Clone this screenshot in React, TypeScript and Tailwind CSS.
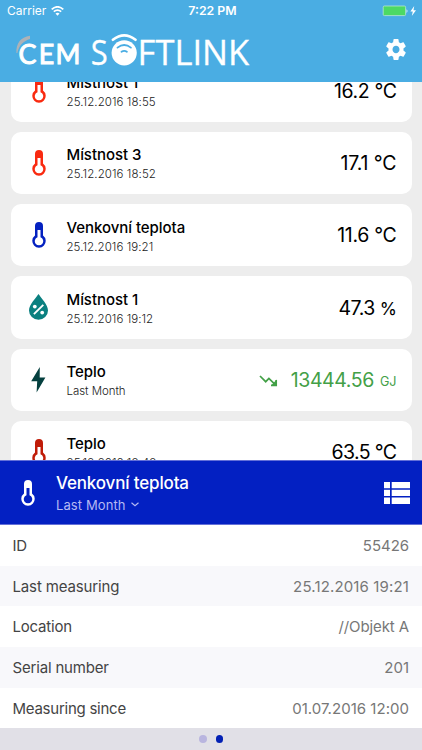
import React from 'react';

type IconKind = 'thermo' | 'drop' | 'bolt';

interface Reading {
  icon: IconKind;
  color: string;
  title: string;
  sub: string;
  subTracking: string;
  value: string;
  valueTracking: string;
  trend?: boolean;
}

const readings: Reading[] = [
  { icon: 'thermo', color: 'text-[#f92a10]', title: 'Místnost 1', sub: '25.12.2016 18:55', subTracking: 'tracking-[0.08px]', value: '16.2 °C', valueTracking: 'tracking-[-0.4px]' },
  { icon: 'thermo', color: 'text-[#f92a10]', title: 'Místnost 3', sub: '25.12.2016 18:52', subTracking: 'tracking-[0.08px]', value: '17.1 °C', valueTracking: 'tracking-[-0.1px]' },
  { icon: 'thermo', color: 'text-[#0421c0]', title: 'Venkovní teplota', sub: '25.12.2016 19:21', subTracking: 'tracking-[0.06px]', value: '11.6 °C', valueTracking: 'tracking-[-0.3px]' },
  { icon: 'drop', color: 'text-[#0b8080]', title: 'Místnost 1', sub: '25.12.2016 19:12', subTracking: 'tracking-[0.06px]', value: '47.3 %', valueTracking: 'tracking-[-0.5px]' },
  { icon: 'bolt', color: 'text-[#05403f]', title: 'Teplo', sub: 'Last Month', subTracking: 'tracking-[-0.05px]', value: '13444.56', valueTracking: 'tracking-[-0.4px]', trend: true },
  { icon: 'thermo', color: 'text-[#c01c08]', title: 'Teplo', sub: '25.12.2016 18:48', subTracking: 'tracking-[0.08px]', value: '63.5 °C', valueTracking: 'tracking-[-0.6px]' },
];

const details = [
  { label: 'ID', labelTracking: 'tracking-[-0.2px]', value: '55426', valueTracking: 'tracking-[-0.05px]' },
  { label: 'Last measuring', labelTracking: 'tracking-[-0.14px]', value: '25.12.2016 19:21', valueTracking: 'tracking-[0.14px]' },
  { label: 'Location', labelTracking: 'tracking-[-0.2px]', value: '//Objekt A', valueTracking: 'tracking-[-0.1px]' },
  { label: 'Serial number', labelTracking: 'tracking-[-0.18px]', value: '201', valueTracking: 'tracking-normal' },
  { label: 'Measuring since', labelTracking: 'tracking-[-0.25px]', value: '01.07.2016 12:00', valueTracking: 'tracking-[0.03px]' },
];

function Thermometer() {
  return (
    <svg className="h-[26px] w-[14px]" viewBox="0 0 14 26" fill="currentColor">
      <path
        fillRule="evenodd"
        d="M7 0a4 4 0 0 1 4 4v9.6a6.7 6.7 0 1 1-8 0V4a4 4 0 0 1 4-4ZM5.5 8v7.2a4.2 4.2 0 1 0 3 0V8Z"
      />
    </svg>
  );
}

function Drop() {
  return (
    <svg className="h-[26px] w-[19px]" viewBox="0 0 19 26">
      <path d="M9.5 0C12 4 19 10.6 19 16.4A9.5 9.3 0 0 1 0 16.4C0 10.6 7 4 9.5 0Z" fill="currentColor" />
      <path d="m4.9 20.2 9.4-9.4" stroke="white" strokeWidth="1.9" />
      <circle cx="5.8" cy="12.6" r="1.9" fill="white" />
      <circle cx="13.2" cy="18.6" r="1.9" fill="white" />
    </svg>
  );
}

function Bolt() {
  return (
    <svg className="h-[26px] w-[15px]" viewBox="0 0 15 26" fill="currentColor">
      <path d="M8.8 0 .2 14.3h6L5.6 25.5 14.4 10.4H8.7Z" />
    </svg>
  );
}

function TrendDown() {
  return (
    <svg className="h-[12px] w-[19px]" viewBox="0 0 19 12" fill="none" stroke="currentColor" strokeWidth="1.7">
      <path d="m1 1 5.7 5.7 3.2-3.3 6.3 6.3" />
      <path d="M12.2 10.4 17.6 4.6V10.4Z" fill="currentColor" stroke="none" />
      <path d="M12 10.3h5.2V5" />
    </svg>
  );
}

function Logo() {
  return (
    <svg className="h-[40px] w-[240px]" viewBox="14 30 240 40">
      <path d="M16.4 53C16 43.5 20.5 37.2 30 35.8V39C23.5 41 19.2 45 17.3 53Z" fill="#adb2b7" />
      <g fill="white" stroke="white" strokeWidth="1" fontSize="26.8" className="font-['Lato',sans-serif] font-normal">
        <text x="18.6" y="64.3">C</text>
        <text x="38.7" y="64.3">E</text>
        <text x="55.6" y="64.3">M</text>
      </g>
      <g fill="white" stroke="white" strokeWidth=".3" fontSize="34.5" className="font-['Open_Sans',sans-serif] font-normal">
        <text x="90.7" y="64.8" textLength="17" lengthAdjust="spacingAndGlyphs">S</text>
        <text x="137.6" y="64.8" textLength="111.6" lengthAdjust="spacingAndGlyphs">FTLINK</text>
      </g>
      <circle cx="124.2" cy="52.8" r="12.6" fill="white" />
      <g fill="none" strokeLinecap="round">
        <path d="M113 42Q124.2 32.4 135.4 42" stroke="#4aade3" strokeWidth="3.6" />
        <path d="M112.9 39.8Q124.2 30.8 135.5 39.8" stroke="white" strokeWidth="2.6" />
        <path d="M117.5 47.6Q124.2 42.4 130.9 47.6" stroke="#4aade3" strokeWidth="1.8" />
        <path d="M121.5 51.8Q124.2 50 126.9 51.8" stroke="#4aade3" strokeWidth="1.8" />
      </g>
    </svg>
  );
}

function ReadingCard({ item }: { item: Reading }) {
  return (
    <article className="flex h-[62.3px] shrink-0 items-center rounded-[10px] bg-white pr-[15px]">
      <div className={`flex w-[56px] shrink-0 justify-center ${item.color}`}>
        {item.icon === 'thermo' && <Thermometer />}
        {item.icon === 'drop' && <Drop />}
        {item.icon === 'bolt' && <Bolt />}
      </div>
      <div className="flex-1 pt-[4px] whitespace-nowrap">
        <h2 className="text-[15px] leading-[20px] font-medium tracking-[-0.05px] text-black">{item.title}</h2>
        <p className={`text-[11.5px] leading-[19px] font-light text-[#222] ${item.subTracking}`}>{item.sub}</p>
      </div>
      {item.trend ? (
        <div className="flex items-center pt-[2px] text-[#43a047]">
          <TrendDown />
          <span className={`ml-[13px] pt-px text-[19.5px] leading-none ${item.valueTracking}`}>{item.value}</span>
          <span className="mt-[4px] ml-[6px] text-[12.6px] leading-none">GJ</span>
        </div>
      ) : (
        <span className={`pt-[2px] text-[19.5px] leading-none text-black ${item.valueTracking}`}>
          {item.value.endsWith('%') ? (
            <>47.3 <span className="text-[17.5px]">%</span></>
          ) : (
            item.value
          )}
        </span>
      )}
    </article>
  );
}

export default function App() {
  return (
    <div className="flex h-[750px] w-[422px] flex-col overflow-hidden bg-[#ededed] font-['Inter',sans-serif]">
      <header className="h-[81.5px] shrink-0 bg-[#4aade3] text-white">
        <div className="grid h-[22px] grid-cols-3 items-center pr-[4px] pl-[7px] text-[12px] leading-none">
          <div className="flex items-center gap-[5px]">
            <span>Carrier</span>
            <svg className="h-[10px] w-[13px]" viewBox="0 0 13 10" fill="none" stroke="white" strokeWidth="1.7">
              <path d="M.7 3.4Q6.5-1.8 12.3 3.4M2.8 5.7Q6.5 2.5 10.2 5.7" />
              <path d="M4.5 7.5Q6.5 6 8.5 7.5L6.5 9.7Z" fill="white" stroke="none" />
            </svg>
          </div>
          <span className="pt-px text-center text-[12.3px] font-semibold">7:22 PM</span>
          <svg className="h-[12px] w-[36px] justify-self-end" viewBox="0 0 36 12">
            <rect x="1.2" y="1" width="22.4" height="9.6" rx="1.2" fill="#4cd964" stroke="#b7e7cf" strokeWidth=".8" />
            <path d="M24.5 4.2a2.2 2.2 0 0 1 0 3.7Z" fill="#d9eff9" />
            <path d="m32.2 1-3.8 5.6h2.4L29.8 11l4.2-5.7h-2.5Z" fill="white" />
          </svg>
        </div>
        <div className="flex items-start justify-between pt-2 pr-4 pl-[14px]">
          <Logo />
          <svg className="mt-[9px] h-[21px] w-[20px]" viewBox="2 2 20 20" preserveAspectRatio="none" fill="white">
            <path d="M19.43 12.98c.04-.32.07-.64.07-.98s-.03-.66-.07-.98l2.11-1.65c.19-.15.24-.42.12-.64l-2-3.46c-.12-.22-.39-.3-.61-.22l-2.49 1c-.52-.4-1.08-.73-1.69-.98l-.38-2.65A.488.488 0 0 0 14 2h-4c-.25 0-.46.18-.49.42l-.38 2.65c-.61.25-1.17.59-1.69.98l-2.49-1c-.23-.09-.49 0-.61.22l-2 3.46c-.13.22-.07.49.12.64l2.11 1.65c-.04.32-.07.65-.07.98s.03.66.07.98l-2.11 1.65c-.19.15-.24.42-.12.64l2 3.46c.12.22.39.3.61.22l2.49-1c.52.4 1.08.73 1.69.98l.38 2.65c.03.24.24.42.49.42h4c.25 0 .46-.18.49-.42l.38-2.65c.61-.25 1.17-.59 1.69-.98l2.49 1c.23.09.49 0 .61-.22l2-3.46c.12-.22.07-.49-.12-.64l-2.11-1.65zM12 15.5c-1.93 0-3.5-1.57-3.5-3.5s1.57-3.5 3.5-3.5 3.5 1.57 3.5 3.5-1.57 3.5-3.5 3.5z" />
          </svg>
        </div>
      </header>

      <main className="h-[378.5px] shrink-0 overflow-hidden px-[10.5px]">
        <div className="-mt-[22.2px] flex flex-col gap-[10px]">
          {readings.map((item, i) => <ReadingCard key={i} item={item} />)}
        </div>
      </main>

      <section className="flex h-[65px] shrink-0 items-center border-y border-[#6470d8] bg-[#0320c2] pr-3 pl-[21px] text-white">
        <Thermometer />
        <div className="ml-[21px] flex-1 pt-[2px]">
          <h2 className="text-[17px] leading-[22px] font-medium tracking-[-0.16px]">Venkovní teplota</h2>
          <div className="flex items-center gap-[5px] text-[13px] leading-[22px] tracking-[0.1px] text-[#b5b9f3]">
            <span>Last Month</span>
            <svg className="h-[5px] w-2" viewBox="0 0 8 5" fill="none" stroke="currentColor" strokeWidth="1.2">
              <path d="m.5.7 3.5 3 3.5-3" />
            </svg>
          </div>
        </div>
        <svg className="h-[22px] w-[26px]" viewBox="0 0 26 22" fill="white">
          <path d="M0 0h6v6.3H0ZM7.7 0H26v6.3H7.7ZM0 7.8h6v6.2H0ZM7.7 7.8H26V14H7.7ZM0 15.5h6V22H0ZM7.7 15.5H26V22H7.7Z" />
        </svg>
      </section>

      <dl className="shrink-0 text-[15px] leading-none">
        {details.map((row) => (
          <div key={row.label} className="flex h-[40.7px] items-center justify-between bg-white pr-[13px] pl-[12.5px] even:bg-[#f8f8fb]">
            <dt className={`text-[#444] ${row.labelTracking}`}>{row.label}</dt>
            <dd className={`text-[#777] ${row.valueTracking}`}>{row.value}</dd>
          </div>
        ))}
      </dl>

      <footer className="flex flex-1 items-center justify-center gap-[9px] bg-[#e1e0e7]">
        <span className="size-[7.5px] rounded-full bg-[#b9b5df]" />
        <span className="size-[7.5px] rounded-full bg-[#0320b4]" />
      </footer>
    </div>
  );
}
